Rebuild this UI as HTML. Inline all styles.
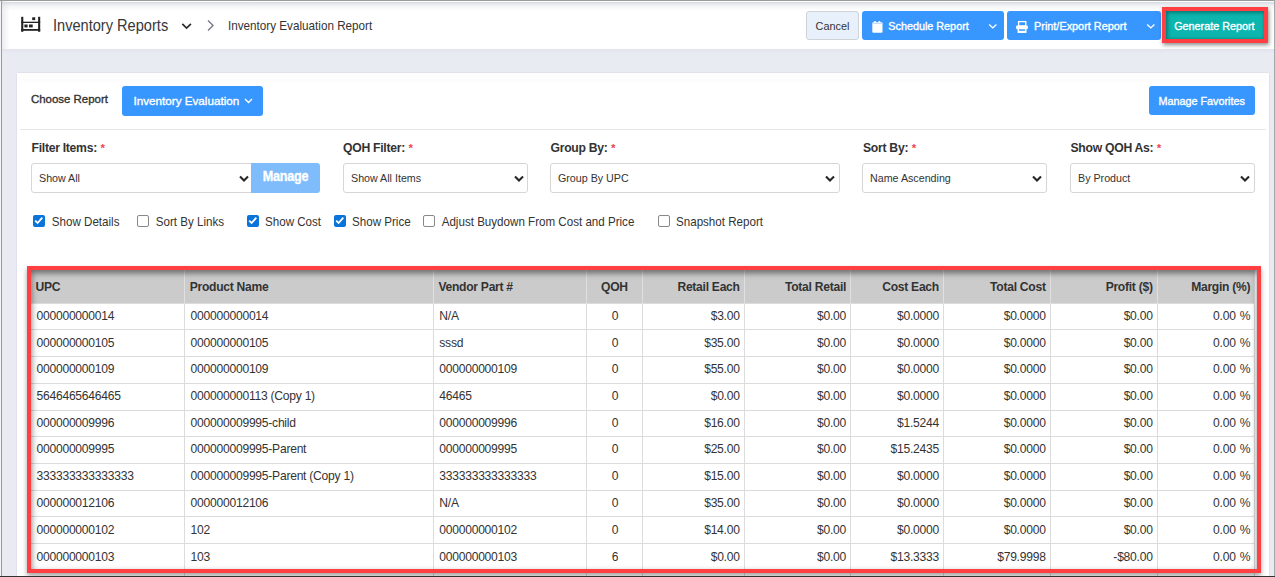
<!DOCTYPE html>
<html><head><meta charset="utf-8">
<style>
*{box-sizing:border-box;margin:0;padding:0}
html,body{width:1275px;height:577px;overflow:hidden;background:#e9ebf3;font-family:"Liberation Sans",sans-serif;color:#333}
.abs{position:absolute;white-space:nowrap}
.wt{-webkit-text-stroke:0.35px #fff}
#frameT{position:absolute;left:0;top:0;width:1275px;height:1px;background:#9a9a9a;z-index:50}
#frameL{position:absolute;left:1px;top:0;width:1px;height:577px;background:#9a9a9a;z-index:50}
#frameR{position:absolute;left:1274px;top:0;width:1px;height:577px;background:#a8a8a8;z-index:50}
#frameB{position:absolute;left:0;top:576px;width:1275px;height:1px;background:#333;z-index:50}
#header{position:absolute;left:2px;top:1px;width:1272px;height:48px;background:#fff}
#header .shade{position:absolute;left:0;top:1px;width:100%;height:9px;background:linear-gradient(rgba(205,208,218,.75),rgba(225,225,230,.35) 45%,rgba(255,255,255,0))}
.btn{position:absolute;border-radius:3px;color:#fff;font-size:10.8px;text-align:center}
.blue{background:#3897fe}
#card{position:absolute;left:16px;top:72px;width:1254px;height:520px;background:#fff;border:1px solid #e1e2e9;border-radius:3px}
.lbl{position:absolute;font-weight:bold;font-size:12.2px;letter-spacing:-0.28px;color:#333;white-space:nowrap;line-height:17.2px}
.lbl i{font-style:normal;color:#f04656;font-weight:bold;margin-left:3.5px;font-size:11.5px;letter-spacing:0}
.sel{position:absolute;height:29.2px;border:1px solid #d6d6d6;border-radius:3px;background:#fff;font-size:10.7px;color:#333;line-height:29.4px;padding-left:7px;white-space:nowrap}
.sel svg{position:absolute;right:3.5px;top:10.5px}
.cb{position:absolute;top:215px;width:11.6px;height:11.8px;border-radius:2px}
.cb.on{background:#0a74da}
.cb.off{border:1px solid #888;background:#fff}
.cbt{position:absolute;top:214.5px;font-size:11.6px;line-height:14px;color:#333;white-space:nowrap;transform:scaleY(1.1);transform-origin:0 11px}
table{position:absolute;left:31px;top:270px;width:1224px;border-right:1px solid #d8d8d8;border-collapse:collapse;table-layout:fixed;font-size:12.1px;letter-spacing:-0.25px;color:#333}
th{height:33.3px;background:#cbcbcb;font-weight:bold;font-size:12.1px;letter-spacing:-0.27px;text-align:left;padding:1.6px 4.2px 0 4.6px;border-left:1px solid #e0e0e0;white-space:nowrap}
td{height:26.7px;padding:0 4.2px 1.2px 5.5px;border-left:1px solid #dcdcdc;border-top:1px solid #dcdcdc;white-space:nowrap;background:#fff}
th:first-child,td:first-child{border-left:none}
tbody tr:nth-child(10) td{padding-top:1.2px;padding-bottom:0}
.r{text-align:right}
td:last-child{word-spacing:1px}
.c{text-align:center}
#redbox{position:absolute;left:27px;top:266px;width:1234px;height:307px;border:4px solid #ff3f42;box-shadow:0 3px 5px rgba(0,0,0,.36), inset 0.5px 3px 6px rgba(0,0,0,.5);z-index:10}
#redgen{position:absolute;left:1162px;top:7px;width:106px;height:36px;border:4px solid #ff3f42;box-shadow:1px 2px 4px rgba(0,0,0,.45), inset 1px 1px 4px rgba(0,0,0,.45);z-index:10}
</style></head><body>
<div id="frameT"></div><div style="position:absolute;left:0;top:0;width:1px;height:577px;background:#f4f4f6;z-index:49"></div><div id="frameL"></div><div id="frameR"></div><div id="frameB"></div>

<div id="header"><div style="position:absolute;left:0;top:0;width:8px;height:48px;background:linear-gradient(to right,#ededf0,#fff)"></div><div class="shade"></div></div><div style="position:absolute;left:2px;top:49px;width:1272px;height:5px;background:linear-gradient(#e3e3ed,#e9ebf3)"></div>

<!-- shelf icon -->
<svg class="abs" style="left:20px;top:16px" width="22" height="17" viewBox="0 0 22 17">
  <rect x="1.2" y="0.8" width="2.1" height="15" fill="#222"/>
  <rect x="18.1" y="0.8" width="2.1" height="15" fill="#222"/>
  <rect x="1.2" y="5.7" width="19" height="1.3" fill="#222"/>
  <rect x="1.2" y="13" width="19" height="1.8" fill="#222"/>
  <rect x="12.2" y="1.3" width="3" height="2.8" fill="#222"/>
  <rect x="4.4" y="8.5" width="3.2" height="2.9" fill="#222"/>
  <rect x="9" y="8.5" width="3.7" height="2.9" fill="#222"/>
</svg>
<div class="abs" style="left:53px;top:16.9px;font-size:14.6px;line-height:18px;color:#383838;transform:scaleY(1.07);transform-origin:0 14.5px">Inventory Reports</div>
<svg class="abs" style="left:180.5px;top:22px" width="12" height="9" viewBox="0 0 12 9"><path d="M1.3 1.8 L5.6 6 L9.9 1.8" fill="none" stroke="#2a2a2a" stroke-width="1.7"/></svg>
<svg class="abs" style="left:206px;top:19px" width="10" height="13" viewBox="0 0 10 13"><path d="M2 1.5 L7 6.5 L2 11.5" fill="none" stroke="#777a88" stroke-width="1.4"/></svg>
<div class="abs" style="left:228px;top:18px;font-size:11.7px;line-height:15px;color:#333;transform:scaleY(1.11);transform-origin:0 11.6px">Inventory Evaluation Report</div>

<!-- top buttons -->
<div class="btn" style="left:806px;top:11px;width:53px;height:29px;background:#e8f1fb;border:1px solid #cfd3d8;color:#333;line-height:29px;font-size:10.9px">Cancel</div>
<div class="btn blue" style="left:862px;top:11px;width:142px;height:29px"></div>

<svg class="abs" style="left:871.5px;top:21px" width="11" height="12" viewBox="0 0 11 12"><rect x="0.3" y="1.3" width="10.2" height="10.4" rx="1" fill="#fff"/><rect x="0.3" y="2.4" width="10.2" height="0.6" fill="#9cc9fb"/><rect x="2.2" y="0" width="1.6" height="2" fill="#fff"/><rect x="6.6" y="0" width="1.6" height="2" fill="#fff"/></svg>
<div class="abs wt" style="left:888.3px;top:19px;font-size:10.8px;line-height:15px;color:#fff">Schedule Report</div>
<svg class="abs" style="left:987.5px;top:22.5px" width="10" height="7" viewBox="0 0 10 7"><path d="M1.2 1.5 L4.8 4.9 L8.4 1.5" fill="none" stroke="#fff" stroke-width="1.4"/></svg>

<div class="btn blue" style="left:1007px;top:11px;width:154px;height:29px"></div>

<svg class="abs" style="left:1016px;top:21px" width="12" height="12" viewBox="0 0 12 12"><rect x="2.6" y="0.6" width="7.2" height="4.4" fill="none" stroke="#fff" stroke-width="1.3"/><rect x="0.1" y="4.6" width="11.8" height="3.6" rx="1.2" fill="#fff"/><rect x="1.6" y="7.6" width="8.9" height="4.3" rx="0.5" fill="#fff"/><rect x="3" y="8.3" width="6.1" height="1.5" fill="#3897fe"/></svg>
<div class="abs wt" style="left:1034px;top:19px;font-size:10.88px;line-height:15px;color:#fff">Print/Export Report</div>
<svg class="abs" style="left:1145.5px;top:22.5px" width="10" height="7" viewBox="0 0 10 7"><path d="M1.2 1.5 L4.8 4.9 L8.4 1.5" fill="none" stroke="#fff" stroke-width="1.4"/></svg>

<div class="btn" style="left:1166px;top:11px;width:98px;height:28px;background:#0cb5ae;border-radius:0"></div>
<div class="abs wt" style="left:1174.2px;top:19px;font-size:10.8px;line-height:15px;color:#fff">Generate Report</div>
<div id="redgen"></div>

<!-- card -->
<div id="card">
  <div style="position:absolute;left:0;top:0;width:100%;height:10px;background:#fdfdfd"></div>
  <div style="position:absolute;left:3px;top:56px;width:1246px;height:1px;background:#e6e6e6"></div>
</div>
<div class="abs" style="left:31px;top:92px;font-size:11.45px;line-height:14px;-webkit-text-stroke:0.35px #333">Choose Report</div>
<div class="btn blue" style="left:122px;top:86px;width:141px;height:30px"></div>
<div class="abs wt" style="left:133.5px;top:92.5px;font-size:11.68px;line-height:15px;color:#fff">Inventory Evaluation</div>
<svg class="abs" style="left:244px;top:98px" width="9" height="6" viewBox="0 0 9 6"><path d="M1 1 L4.5 4.5 L8 1" fill="none" stroke="#fff" stroke-width="1.4"/></svg>
<div class="btn blue" style="left:1149px;top:86px;width:106px;height:29px"></div>
<div class="abs wt" style="left:1158.5px;top:94px;font-size:10.8px;line-height:15px;color:#fff">Manage Favorites</div>

<!-- filters -->
<div class="lbl" style="left:31.5px;top:140px">Filter Items:<i>*</i></div>
<div class="lbl" style="left:343px;top:140px">QOH Filter:<i>*</i></div>
<div class="lbl" style="left:550.5px;top:140px">Group By:<i>*</i></div>
<div class="lbl" style="left:863px;top:140px">Sort By:<i>*</i></div>
<div class="lbl" style="left:1070.5px;top:140px">Show QOH As:<i>*</i></div>

<div class="sel" style="left:31px;top:163.4px;width:222px;border-radius:3px 0 0 3px">Show All<svg width="10" height="8" viewBox="0 0 10 8"><path d="M1 1.6 L5 5.6 L9 1.6" fill="none" stroke="#262626" stroke-width="2.1"/></svg></div>
<div class="btn" style="left:251px;top:163.4px;width:69px;height:29.2px;background:#7fbcfc;border-radius:0 3px 3px 0"><span class="abs" style="left:0;top:0;width:69px;text-align:center;font-weight:bold;font-size:12.6px;letter-spacing:-0.2px;line-height:28.8px;transform:scaleY(1.12);transform-origin:0 19px;-webkit-text-stroke:0.3px #fff">Manage</span></div>
<div class="sel" style="left:343px;top:163.4px;width:185px">Show All Items<svg width="10" height="8" viewBox="0 0 10 8"><path d="M1 1.6 L5 5.6 L9 1.6" fill="none" stroke="#262626" stroke-width="2.1"/></svg></div>
<div class="sel" style="left:550px;top:163.4px;width:289.8px">Group By UPC<svg width="10" height="8" viewBox="0 0 10 8"><path d="M1 1.6 L5 5.6 L9 1.6" fill="none" stroke="#262626" stroke-width="2.1"/></svg></div>
<div class="sel" style="left:862px;top:163.4px;width:184.5px">Name Ascending<svg width="10" height="8" viewBox="0 0 10 8"><path d="M1 1.6 L5 5.6 L9 1.6" fill="none" stroke="#262626" stroke-width="2.1"/></svg></div>
<div class="sel" style="left:1070px;top:163.4px;width:184.5px">By Product<svg width="10" height="8" viewBox="0 0 10 8"><path d="M1 1.6 L5 5.6 L9 1.6" fill="none" stroke="#262626" stroke-width="2.1"/></svg></div>

<!-- checkboxes -->
<div class="cb on" style="left:33px"><svg width="12" height="12" viewBox="0 0 12 12" style="position:absolute;left:0;top:0"><path d="M2.2 5.6 L4.6 8 L9.3 2.7" fill="none" stroke="#fff" stroke-width="1.8"/></svg></div>
<div class="cbt" style="left:51.8px">Show Details</div>
<div class="cb off" style="left:137px"></div>
<div class="cbt" style="left:155.8px">Sort By Links</div>
<div class="cb on" style="left:247px"><svg width="12" height="12" viewBox="0 0 12 12" style="position:absolute;left:0;top:0"><path d="M2.2 5.6 L4.6 8 L9.3 2.7" fill="none" stroke="#fff" stroke-width="1.8"/></svg></div>
<div class="cbt" style="left:265px">Show Cost</div>
<div class="cb on" style="left:334px"><svg width="12" height="12" viewBox="0 0 12 12" style="position:absolute;left:0;top:0"><path d="M2.2 5.6 L4.6 8 L9.3 2.7" fill="none" stroke="#fff" stroke-width="1.8"/></svg></div>
<div class="cbt" style="left:352px">Show Price</div>
<div class="cb off" style="left:423px"></div>
<div class="cbt" style="left:441.7px">Adjust Buydown From Cost and Price</div>
<div class="cb off" style="left:658px"></div>
<div class="cbt" style="left:676px">Snapshot Report</div>

<!-- table -->
<table>
<colgroup><col style="width:153.6px"><col style="width:248.7px"><col style="width:153px"><col style="width:55.9px"><col style="width:102.2px"><col style="width:106.4px"><col style="width:92.9px"><col style="width:106.7px"><col style="width:107px"><col style="width:97.6px"></colgroup>
<thead><tr><th>UPC</th><th>Product Name</th><th>Vendor Part #</th><th class="c">QOH</th><th class="r">Retail Each</th><th class="r">Total Retail</th><th class="r">Cost Each</th><th class="r">Total Cost</th><th class="r">Profit ($)</th><th class="r">Margin (%)</th></tr></thead>
<tbody>
<tr><td>000000000014</td><td>000000000014</td><td>N/A</td><td class="c">0</td><td class="r">$3.00</td><td class="r">$0.00</td><td class="r">$0.0000</td><td class="r">$0.0000</td><td class="r">$0.00</td><td class="r">0.00 %</td></tr>
<tr><td>000000000105</td><td>000000000105</td><td>sssd</td><td class="c">0</td><td class="r">$35.00</td><td class="r">$0.00</td><td class="r">$0.0000</td><td class="r">$0.0000</td><td class="r">$0.00</td><td class="r">0.00 %</td></tr>
<tr><td>000000000109</td><td>000000000109</td><td>000000000109</td><td class="c">0</td><td class="r">$55.00</td><td class="r">$0.00</td><td class="r">$0.0000</td><td class="r">$0.0000</td><td class="r">$0.00</td><td class="r">0.00 %</td></tr>
<tr><td>5646465646465</td><td>000000000113 (Copy 1)</td><td>46465</td><td class="c">0</td><td class="r">$0.00</td><td class="r">$0.00</td><td class="r">$0.0000</td><td class="r">$0.0000</td><td class="r">$0.00</td><td class="r">0.00 %</td></tr>
<tr><td>000000009996</td><td>000000009995-child</td><td>000000009996</td><td class="c">0</td><td class="r">$16.00</td><td class="r">$0.00</td><td class="r">$1.5244</td><td class="r">$0.0000</td><td class="r">$0.00</td><td class="r">0.00 %</td></tr>
<tr><td>000000009995</td><td>000000009995-Parent</td><td>000000009995</td><td class="c">0</td><td class="r">$25.00</td><td class="r">$0.00</td><td class="r">$15.2435</td><td class="r">$0.0000</td><td class="r">$0.00</td><td class="r">0.00 %</td></tr>
<tr><td>333333333333333</td><td>000000009995-Parent (Copy 1)</td><td>333333333333333</td><td class="c">0</td><td class="r">$15.00</td><td class="r">$0.00</td><td class="r">$0.0000</td><td class="r">$0.0000</td><td class="r">$0.00</td><td class="r">0.00 %</td></tr>
<tr><td>000000012106</td><td>000000012106</td><td>N/A</td><td class="c">0</td><td class="r">$35.00</td><td class="r">$0.00</td><td class="r">$0.0000</td><td class="r">$0.0000</td><td class="r">$0.00</td><td class="r">0.00 %</td></tr>
<tr><td>000000000102</td><td>102</td><td>000000000102</td><td class="c">0</td><td class="r">$14.00</td><td class="r">$0.00</td><td class="r">$0.0000</td><td class="r">$0.0000</td><td class="r">$0.00</td><td class="r">0.00 %</td></tr>
<tr><td>000000000103</td><td>103</td><td>000000000103</td><td class="c">6</td><td class="r">$0.00</td><td class="r">$0.00</td><td class="r">$13.3333</td><td class="r">$79.9998</td><td class="r">-$80.00</td><td class="r">0.00 %</td></tr>
<tr><td>&nbsp;</td><td></td><td></td><td></td><td></td><td></td><td></td><td></td><td></td><td></td></tr>
</tbody>
</table>
<div id="redbox"></div>
</body></html>
